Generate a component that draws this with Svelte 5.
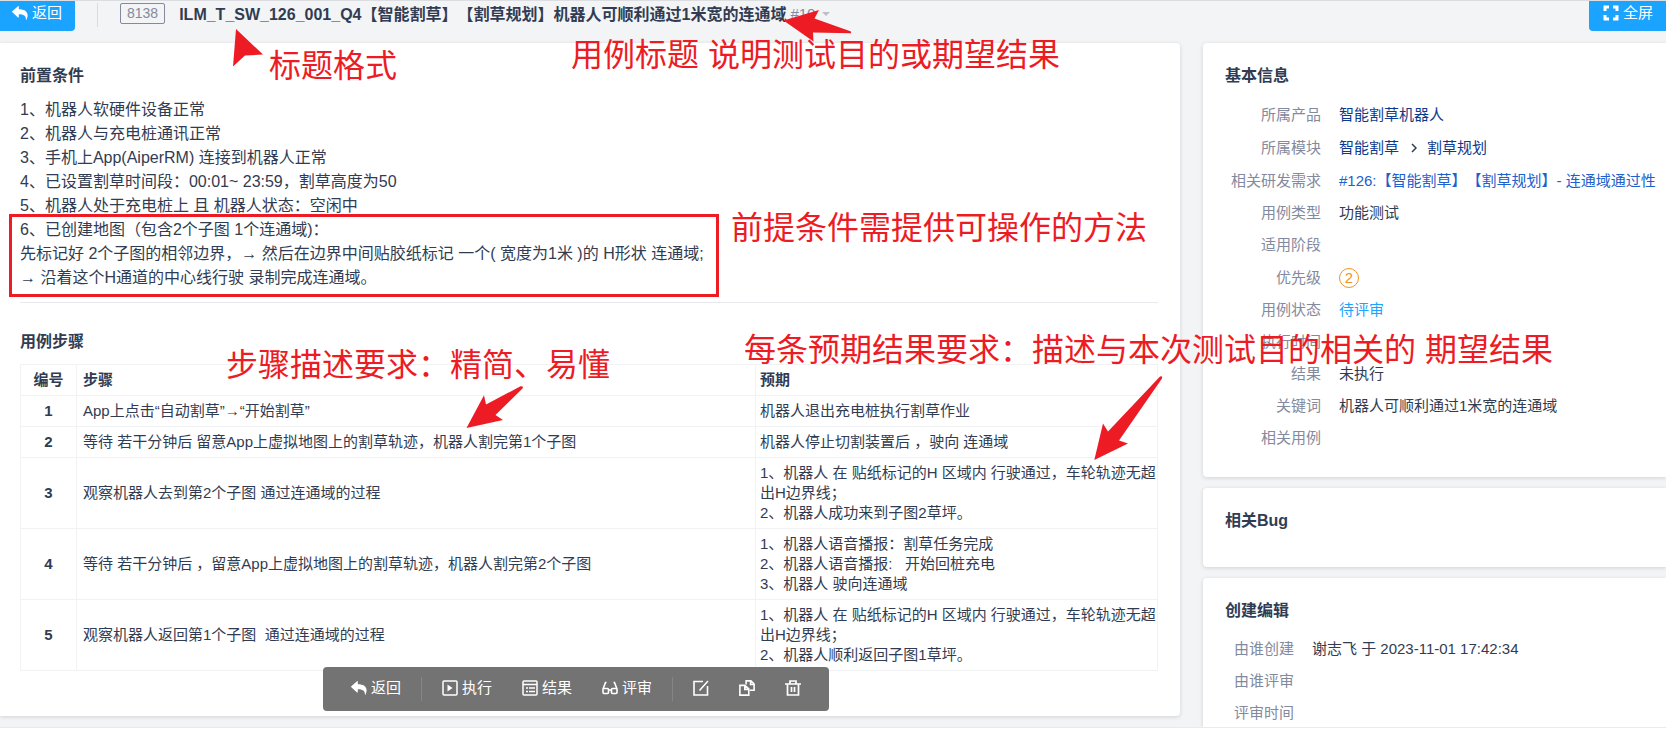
<script lang="ts">
  type Field = { label: string; value?: string; kind?: "link" | "path" | "story" | "pri" | "status" };

  const precondition = [
    "1、机器人软硬件设备正常",
    "2、机器人与充电桩通讯正常",
    "3、手机上App(AiperRM) 连接到机器人正常",
    "4、已设置割草时间段\uff1a00:01~ 23:59\uff0c割草高度为50",
    "5、机器人处于充电桩上 且 机器人状态\uff1a空闲中",
    "6、已创建地图\uff08包含2个子图 1个连通域)\uff1a",
    "先标记好 2个子图的相邻边界\uff0c→ 然后在边界中间贴胶纸标记 一个( 宽度为1米 )的 H形状 连通域;",
    "→ 沿着这个H通道的中心线行驶 录制完成连通域。",
  ];

  const steps = [
    { desc: "App上点击“自动割草”→“开始割草”", expect: "机器人退出充电桩执行割草作业" },
    {
      desc: "等待 若干分钟后 留意App上虚拟地图上的割草轨迹\uff0c机器人割完第1个子图",
      expect: "机器人停止切割装置后 \uff0c驶向 连通域",
    },
    {
      desc: "观察机器人去到第2个子图 通过连通域的过程",
      expect: "1、机器人 在 贴纸标记的H 区域内 行驶通过\uff0c车轮轨迹无超出H边界线\uff1b\n2、机器人成功来到子图2草坪。",
    },
    {
      desc: "等待 若干分钟后 \uff0c留意App上虚拟地图上的割草轨迹\uff0c机器人割完第2个子图",
      expect: "1、机器人语音播报\uff1a割草任务完成\n2、机器人语音播报:   开始回桩充电\n3、机器人 驶向连通域",
    },
    {
      desc: "观察机器人返回第1个子图  通过连通域的过程",
      expect: "1、机器人 在 贴纸标记的H 区域内 行驶通过\uff0c车轮轨迹无超出H边界线\uff1b\n2、机器人顺利返回子图1草坪。",
    },
  ];

  const basic: Field[] = [
    { label: "所属产品", value: "智能割草机器人", kind: "link" },
    { label: "所属模块", kind: "path" },
    { label: "相关研发需求", value: "#126:【智能割草】【割草规划】- 连通域通过性", kind: "story" },
    { label: "用例类型", value: "功能测试" },
    { label: "适用阶段" },
    { label: "优先级", value: "2", kind: "pri" },
    { label: "用例状态", value: "待评审", kind: "status" },
    { label: "执行时间" },
    { label: "结果", value: "未执行" },
    { label: "关键词", value: "机器人可顺利通过1米宽的连通域" },
    { label: "相关用例" },
  ];

  const life: Field[] = [
    { label: "由谁创建", value: "谢志飞 于 2023-11-01 17:42:34" },
    { label: "由谁评审" },
    { label: "评审时间" },
  ];
</script>

{#snippet backIcon()}
  <svg class="icon" viewBox="0 0 16 16" aria-hidden="true">
    <path fill="currentColor" d="M.3 6.3 6 1.2c.4-.3.8-.1.8.4v2.6c5.6 0 9 2.2 8.8 6.4-.1 1.7-.6 3.2-1.2 4.2-.2.3-.5.2-.5-.2.1-3.8-2.2-5.3-7.1-5.3v2.7c0 .5-.4.7-.8.4L.3 7.2a.6.6 0 0 1 0-.9z" />
  </svg>
{/snippet}

<div class="page" lang="zh-CN">
  <header>
    <button class="primary back">{@render backIcon()}返回</button>
    <span class="divider"></span>
    <span class="case-id">8138</span>
    <h1>ILM_T_SW_126_001_Q4【智能割草】【割草规划】机器人可顺利通过1米宽的连通域</h1>
    <button class="version">#10<span class="caret"></span></button>
    <button class="primary full">
      <svg class="icon" viewBox="0 0 16 16" fill="none" stroke="currentColor" stroke-width="3" aria-hidden="true">
        <path d="M6 2H2v4M10 2h4v4M14 10v4h-4M6 14H2v-4" />
      </svg>全屏
    </button>
  </header>

  <div class="columns">
    <main class="card">
      <h2>前置条件</h2>
      <div class="pre">
        {#each precondition as line}
          <p>{line}</p>
        {/each}
      </div>
      <hr />
      <h2>用例步骤</h2>
      <table>
        <thead>
          <tr><th class="num">编号</th><th>步骤</th><th class="expect">预期</th></tr>
        </thead>
        <tbody>
          {#each steps as step, i}
            <tr>
              <th class="num">{i + 1}</th>
              <td>{step.desc}</td>
              <td class="expect">{step.expect}</td>
            </tr>
          {/each}
        </tbody>
      </table>

      <nav class="actions">
        <button>{@render backIcon()}返回</button>
        <span class="sep"></span>
        <button>
          <svg class="icon" viewBox="0 0 16 16" aria-hidden="true">
            <rect x="1" y="1" width="14" height="14" rx="1" fill="none" stroke="currentColor" stroke-width="1.5" />
            <path d="M5.5 4.5v7l5-3.5z" fill="currentColor" />
          </svg>执行
        </button>
        <button>
          <svg class="icon" viewBox="0 0 16 16" fill="none" stroke="currentColor" stroke-width="1.5" aria-hidden="true">
            <rect x="1" y="1" width="14" height="14" rx="1" />
            <path d="M1 4.5h14M4 8h2M7 8h6M4 11.5h2M7 11.5h6" />
          </svg>结果
        </button>
        <button>
          <svg class="icon" viewBox="0 0 16 16" fill="none" stroke="currentColor" stroke-width="1.6" aria-hidden="true">
            <path d="M4.5 2.5h-1L1 9M11.5 2.5h1L15 9M6.5 10h3" />
            <rect x="1" y="8.5" width="5.5" height="5" rx="1" />
            <rect x="9.5" y="8.5" width="5.5" height="5" rx="1" />
          </svg>评审
        </button>
        <span class="sep"></span>
        <button aria-label="编辑">
          <svg class="icon" viewBox="0 0 16 16" fill="none" stroke="currentColor" stroke-width="1.6" aria-hidden="true">
            <path d="M10 1.5H1V15h13.500V6M15 1 6.500 10.500" />
          </svg>
        </button>
        <button aria-label="复制">
          <svg class="icon" viewBox="0 0 18 18" fill="none" stroke="currentColor" stroke-width="1.8" aria-hidden="true">
            <path d="M8 5V1h5.500L17 4.500v7h-5M13 1v4h4" />
            <path d="M1 6h5.500L11 10v7H1zM6.500 6v4.500H11" />
          </svg>
        </button>
        <button aria-label="删除">
          <svg class="icon" viewBox="0 0 16 16" fill="none" stroke="currentColor" stroke-width="1.7" aria-hidden="true">
            <path d="M0 4h16M5 4V1h6v3M2.5 4v11h11V4M6.5 7v5M9.5 7v5" />
          </svg>
        </button>
      </nav>
    </main>

    <aside>
      <section class="card">
        <h2>基本信息</h2>
        <dl>
          {#each basic as f}
            <div class="row" class:tall={f.kind && f.kind !== "status"}>
              <dt>{f.label}</dt>
              <dd>
                {#if f.kind === "path"}
                  <a href="#module">智能割草</a>
                  <svg class="chevron" viewBox="0 0 6 10" fill="none" stroke="currentColor" stroke-width="1.5" aria-hidden="true">
                    <path d="M1 1l4 4-4 4" />
                  </svg>
                  <a href="#plan">割草规划</a>
                {:else if f.kind === "link"}
                  <a href="#product">{f.value}</a>
                {:else if f.kind === "story"}
                  <a class="story" href="#story">{f.value}</a>
                {:else if f.kind === "pri"}
                  <span class="pri">{f.value}</span>
                {:else if f.kind === "status"}
                  <span class="status">{f.value}</span>
                {:else}
                  {f.value ?? ""}
                {/if}
              </dd>
            </div>
          {/each}
        </dl>
      </section>

      <section class="card">
        <h2>相关Bug</h2>
      </section>

      <section class="card last">
        <h2>创建编辑</h2>
        <dl class="life">
          {#each life as f}
            <div class="row">
              <dt>{f.label}</dt>
              <dd>{f.value ?? ""}</dd>
            </div>
          {/each}
        </dl>
      </section>
    </aside>
  </div>

  <!-- review notes, drawn freely on top of the page -->
  <div class="notes">
    <svg width="1200" height="480" fill="#ed1c24" aria-hidden="true">
      <path d="M236 29 263 54.5 245 55.5 233 66.5z" />
      <path d="M783.5 20.5 819 10 814.5 18.5 851 31.5V33.3L813 32.5 813.5 41.5z" />
      <path d="M466.5 428 484 395.3 486 404.5 520.5 386.3Q524 386 522.5 388.5L495.5 415 503 420z" />
      <path d="M1094.3 460 1103 423.5 1108 431.5 1160 376.5Q1163 375.5 1162 378.5L1119 440.5 1128 443.5z" />
    </svg>
    <div class="frame"></div>
    <span class="note format">标题格式</span>
    <span class="note title">用例标题 说明测试目的或期望结果</span>
    <span class="note method">前提条件需提供可操作的方法</span>
    <span class="note brief">{"步骤描述要求\uff1a精简、易懂"}</span>
    <span class="note result">{"每条预期结果要求\uff1a描述与本次测试目的相关的 期望结果"}</span>
  </div>
</div>

<style>
  :global(body) {
    background: #fff;
  }
  .page {
    position: relative;
    overflow: hidden;
    background: #f3f4f6;
    border-top: 1px solid #dcdde0;
    border-bottom: 1px solid #e9eaec;
    color: #313c52;
    font: 15px/20px "Liberation Sans", "Noto Sans CJK SC", sans-serif;
    text-spacing-trim: space-all;
  }
  h1, h2, p, dl, dd {
    margin: 0;
  }
  button {
    display: flex;
    align-items: center;
    gap: 4px;
    padding: 0;
    border: 0;
    background: none;
    color: inherit;
    font: inherit;
    white-space: nowrap;
  }
  .icon {
    width: 16px;
    height: 16px;
    flex: none;
  }
  header {
    display: flex;
    align-items: flex-start;
    height: 42px;
  }
  .primary {
    height: 30px;
    padding: 0 13px 6px;
    background: #1aa3ff;
    color: #fff;
  }
  .back {
    padding-left: 12px;
    border-radius: 0 0 4px 0;
  }
  .full {
    margin-left: auto;
    padding-left: 14px;
    border-radius: 0 0 0 4px;
  }
  .divider {
    width: 1px;
    height: 24px;
    margin: 2px 22px;
    background: #d8dbe0;
  }
  .case-id {
    margin-top: 2px;
    padding: 0 6px;
    border: 1px solid #838a9d;
    border-radius: 2px;
    color: #838a9d;
    font-size: 14px;
    line-height: 19px;
  }
  h1 {
    margin: 3px 4px 0 14px;
    font-size: 16px;
    line-height: 22px;
    white-space: nowrap;
  }
  .version {
    gap: 7px;
    margin-top: 3px;
    color: #838a9d;
  }
  .caret {
    border: 4px solid transparent;
    border-top-color: #b9bec9;
    border-bottom: 0;
  }
  .columns {
    display: grid;
    grid-template-columns: minmax(0, 1180fr) minmax(0, 463fr);
    gap: 23px;
  }
  .card {
    box-sizing: border-box;
    padding: 23px 22px 0;
    border-radius: 4px;
    background: #fff;
    box-shadow: 0 1px 4px rgba(0, 0, 0, 0.14);
  }
  main.card {
    position: relative;
    margin-bottom: 11px;
    padding: 23px 22px 45px 20px;
    border-radius: 0 4px 4px 0;
  }
  h2 {
    font-size: 16px;
    line-height: 20px;
  }
  .pre {
    margin-top: 12px;
    font-size: 16px;
    line-height: 24px;
  }
  hr {
    height: 1px;
    margin: 12px 0 29px;
    border: 0;
    background: #e8e9ec;
  }
  table {
    width: 100%;
    margin-top: 12px;
    border-collapse: collapse;
    table-layout: fixed;
  }
  th,
  td {
    padding: 5px 6px;
    border: 1px solid #f1f2f4;
    text-align: left;
    white-space: pre-wrap;
  }
  th.num {
    width: 43px;
    text-align: center;
  }
  .expect {
    width: 397px;
    padding: 5px 0 5px 4px;
  }
  .actions {
    position: absolute;
    left: 323px;
    bottom: 5px;
    display: flex;
    align-items: center;
    height: 44px;
    padding: 0 28px;
    box-sizing: border-box;
    gap: 30px;
    border-radius: 4px;
    background: #737373;
    color: #fff;
  }
  .actions button {
    padding-bottom: 2px;
  }
  .sep {
    width: 1px;
    height: 24px;
    margin: 0 -10px;
    background: #858585;
  }
  aside {
    display: flex;
    flex-direction: column;
    gap: 11px;
  }
  aside .card {
    padding-bottom: 23px;
    border-radius: 4px 0 0 4px;
  }
  aside .card:nth-child(2) {
    padding-bottom: 36px;
  }
  aside .last {
    flex: 1;
    contain: size;
    padding-bottom: 0;
    border-radius: 4px 0 0 0;
  }
  dl {
    margin-top: 12px;
  }
  .row {
    display: flex;
    align-items: center;
    gap: 18px;
    height: 32px;
    white-space: nowrap;
  }
  .row.tall {
    height: 33px;
  }
  dt {
    flex: none;
    display: flex;
    justify-content: flex-end;
    width: 96px;
    color: #838a9d;
  }
  .life dt {
    width: 69px;
  }
  dd {
    display: flex;
    align-items: center;
  }
  a {
    color: #0c3a8c;
    text-decoration: none;
  }
  .story {
    color: #2060cc;
  }
  .chevron {
    width: 6px;
    height: 10px;
    margin: 0 10px 0 12px;
  }
  .pri {
    width: 18px;
    height: 18px;
    border: 1px solid #f1921f;
    border-radius: 50%;
    color: #f1921f;
    line-height: 18px;
    text-align: center;
  }
  .status {
    color: #1aa3ff;
  }
  .notes {
    position: absolute;
    top: -1px;
    left: 0;
    pointer-events: none;
  }
  .notes svg {
    display: block;
  }
  .frame {
    position: absolute;
    top: 214px;
    left: 9px;
    width: 704px;
    height: 77px;
    border: 3px solid #ed1c24;
  }
  .note {
    position: absolute;
    color: #ed1c24;
    font-size: 32px;
    line-height: 40px;
    white-space: nowrap;
  }
  .format {
    top: 46px;
    left: 269px;
  }
  .title {
    top: 35px;
    left: 571px;
  }
  .method {
    top: 208px;
    left: 731px;
  }
  .brief {
    top: 345px;
    left: 226px;
  }
  .result {
    top: 330px;
    left: 744px;
  }
</style>
